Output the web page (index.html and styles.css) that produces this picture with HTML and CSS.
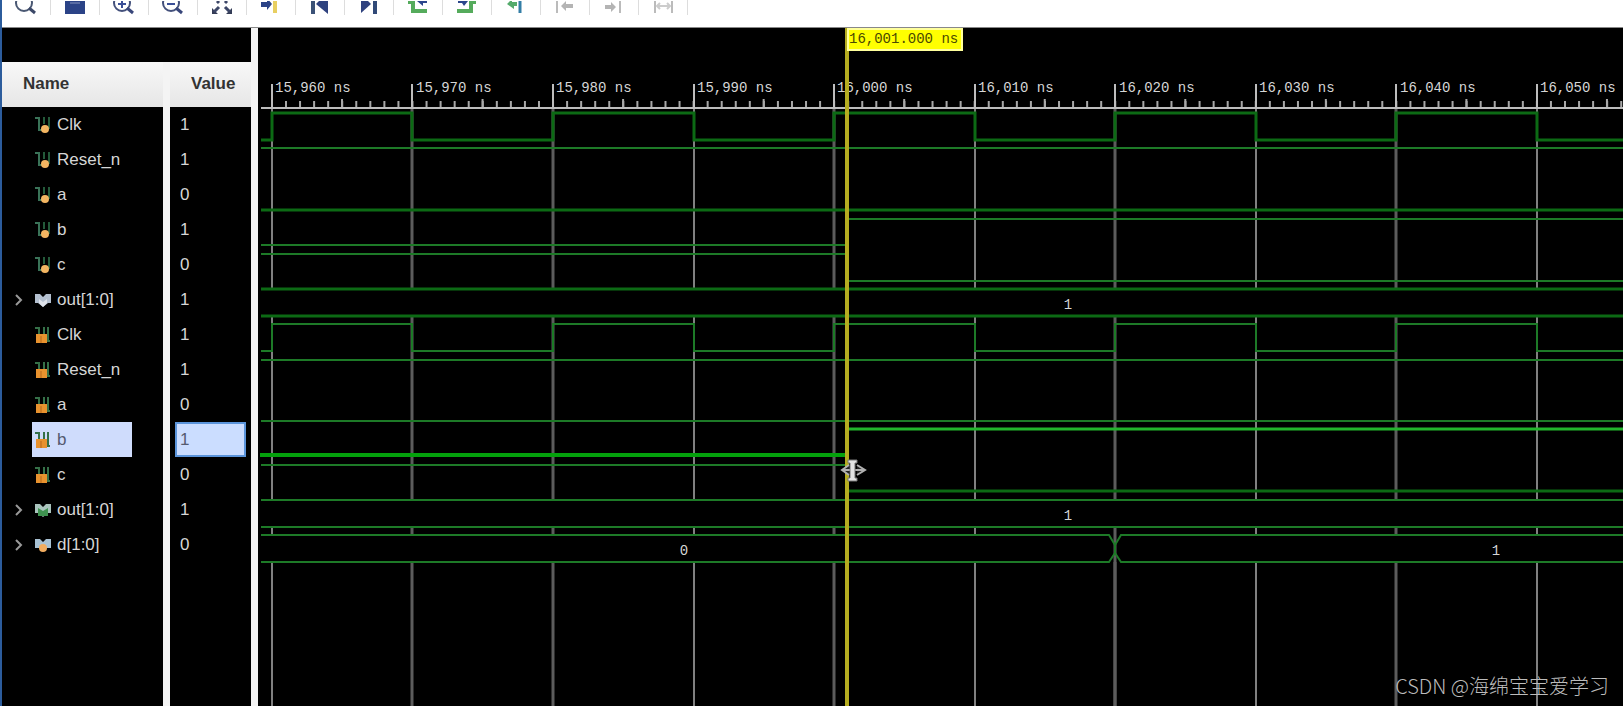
FILE: index.html
```html
<!DOCTYPE html>
<html lang="en">
<head>
<meta charset="utf-8">
<title>Waveform viewer</title>
<link rel="stylesheet" href="styles.css">
</head>
<body>
<svg class="defs" aria-hidden="true">
  <symbol id="sig-in" viewBox="0 0 16 18">
    <path d="M0 2H4V14H8" fill="none" stroke="#3a7358" stroke-width="2"/>
    <path d="M9 1V8M14 1V13" fill="none" stroke="#245a3a" stroke-width="2"/>
    <circle cx="10" cy="13" r="4" fill="#f3b562"/>
  </symbol>
  <symbol id="sig-reg" viewBox="0 0 16 18">
    <path d="M0 2H4V8M9 1V8M13 1V15H15" fill="none" stroke="#357048" stroke-width="2"/>
    <path d="M1 8H12V17H1Z" fill="#e8922e"/>
    <path d="M6 10V17" stroke="#b5661a"/>
  </symbol>
  <symbol id="bus-out" viewBox="0 0 18 18">
    <path d="M1 3H6L9 6L12 3H17V12H14L9 16L4 12H1Z" fill="#b4c0d0"/>
    <path d="M5 8L9 11L13 8V12L9 16L5 12Z" fill="#dfe3ea"/>
  </symbol>
  <symbol id="bus-reg" viewBox="0 0 18 18">
    <path d="M1 3H6L9 6L12 3H17V12H14L9 16L4 12H1Z" fill="#a9c4bd"/>
    <path d="M4 7L9 10L14 7V15H4Z" fill="#3f9350"/>
  </symbol>
  <symbol id="bus-in" viewBox="0 0 18 18">
    <path d="M1 3H6L9 6L12 3H17V12H1Z" fill="#a9c2d4"/>
    <circle cx="9" cy="12" r="4" fill="#f3ad60"/>
  </symbol>
  <symbol id="chevron" viewBox="0 0 8 12"><path d="M1 1L6 6L1 11" fill="none" stroke="#999" stroke-width="2"/></symbol>
</svg>

<div class="viewer">
  <header class="toolbar">
    <button class="tool" aria-label="Search"><svg class="tool-icon" viewBox="0 0 24 14"><circle cx="10" cy="2" r="8" fill="none" stroke="#4a5873" stroke-width="2"/><path d="M15 7L21 12" stroke="#3c4868" stroke-width="3"/></svg></button>
    <button class="tool" aria-label="Save"><svg class="tool-icon" viewBox="0 0 24 14"><path d="M2 0H22V13H2Z" fill="#2b4387"/><path d="M7 2H17" stroke="#8795c0"/></svg></button>
    <button class="tool" aria-label="Zoom in"><svg class="tool-icon" viewBox="0 0 24 14"><circle cx="10" cy="2" r="8" fill="none" stroke="#44517c" stroke-width="2"/><path d="M6 3H14M10 0V7" stroke="#3a4f97" stroke-width="2"/><path d="M15 7L21 12" stroke="#38467a" stroke-width="3"/></svg></button>
    <button class="tool" aria-label="Zoom out"><svg class="tool-icon" viewBox="0 0 24 14"><circle cx="10" cy="2" r="8" fill="none" stroke="#44517c" stroke-width="2"/><path d="M6 3H14" stroke="#3a4f97" stroke-width="2"/><path d="M15 7L21 12" stroke="#38467a" stroke-width="3"/></svg></button>
    <button class="tool" aria-label="Zoom fit"><svg class="tool-icon" viewBox="0 0 24 14"><path d="M2 7L8 13H2ZM22 7L16 13H22Z" fill="#333b55"/><path d="M4 11L9 6M20 11L15 6M7 0L9 2M17 0L15 2" stroke="#3d4768" stroke-width="3"/></svg></button>
    <button class="tool" aria-label="Go to cursor"><svg class="tool-icon" viewBox="0 0 24 14"><path d="M2 1H8V-3L13 3L8 9V6H2Z" fill="#2b4387"/><path d="M16 0V12" stroke="#e8cf62" stroke-width="4"/></svg></button>
    <button class="tool" aria-label="Previous transition"><svg class="tool-icon" viewBox="0 0 24 14"><path d="M5 0V13" stroke="#3b5277" stroke-width="4"/><path d="M20 0V13L8 3L11 0Z" fill="#2f427f"/></svg></button>
    <button class="tool" aria-label="Next transition"><svg class="tool-icon" viewBox="0 0 24 14"><path d="M4 0V12L14 3L11 0Z" fill="#2f427f"/><path d="M18 0V13" stroke="#314a78" stroke-width="4"/></svg></button>
    <button class="tool" aria-label="Previous marker"><svg class="tool-icon" viewBox="0 0 24 14"><path d="M2 1H7V10H21" fill="none" stroke="#55ab5c" stroke-width="4"/><path d="M11 0H21V2H17V5Z" fill="#2c468c"/></svg></button>
    <button class="tool" aria-label="Next marker"><svg class="tool-icon" viewBox="0 0 24 14"><path d="M2 10H16V1H21" fill="none" stroke="#55ab5c" stroke-width="4"/><path d="M3 0H13L9 5L7 2H3Z" fill="#2c468c"/></svg></button>
    <button class="tool" aria-label="Add marker"><svg class="tool-icon" viewBox="0 0 24 14"><path d="M3 3L8 -2V1H13V5H10V8Z" fill="#55ab6c"/><path d="M16 0V12" stroke="#347ea6" stroke-width="3"/></svg></button>
    <button class="tool" aria-label="Previous edge" disabled><svg class="tool-icon" viewBox="0 0 24 14"><path d="M4 0V12" stroke="#bbb" stroke-width="2"/><path d="M8 5L13 0V3H20V7H13V10Z" fill="#b4b4b4"/></svg></button>
    <button class="tool" aria-label="Next edge" disabled><svg class="tool-icon" viewBox="0 0 24 14"><path d="M18 0V12" stroke="#bbb" stroke-width="2"/><path d="M14 6L9 1V4H3V8H9V11Z" fill="#b4b4b4"/></svg></button>
    <button class="tool" aria-label="Fit range" disabled><svg class="tool-icon" viewBox="0 0 24 14"><path d="M4 0V12M21 0V12" stroke="#bbb" stroke-width="2"/><path d="M7 5H18M9 2L6 5L9 8M16 2L19 5L16 8" fill="none" stroke="#ccc" stroke-width="2"/></svg></button>
  </header>

  <main class="panes">
    <section class="signals">
      <table class="signal-table">
        <thead><tr><th class="name-col" scope="col">Name</th><th class="value-head" scope="col">Value</th></tr></thead>
        <tbody>
          <tr><td class="name-col"><div class="name"><svg class="sig"><use href="#sig-in"/></svg>Clk</div></td><td class="value">1</td></tr>
          <tr><td class="name-col"><div class="name"><svg class="sig"><use href="#sig-in"/></svg>Reset_n</div></td><td class="value">1</td></tr>
          <tr><td class="name-col"><div class="name"><svg class="sig"><use href="#sig-in"/></svg>a</div></td><td class="value">0</td></tr>
          <tr><td class="name-col"><div class="name"><svg class="sig"><use href="#sig-in"/></svg>b</div></td><td class="value">1</td></tr>
          <tr><td class="name-col"><div class="name"><svg class="sig"><use href="#sig-in"/></svg>c</div></td><td class="value">0</td></tr>
          <tr><td class="name-col"><div class="name bus"><button class="expand" aria-label="Expand"><svg class="chevron"><use href="#chevron"/></svg></button><svg class="sig"><use href="#bus-out"/></svg>out[1:0]</div></td><td class="value">1</td></tr>
          <tr><td class="name-col"><div class="name"><svg class="sig"><use href="#sig-reg"/></svg>Clk</div></td><td class="value">1</td></tr>
          <tr><td class="name-col"><div class="name"><svg class="sig"><use href="#sig-reg"/></svg>Reset_n</div></td><td class="value">1</td></tr>
          <tr><td class="name-col"><div class="name"><svg class="sig"><use href="#sig-reg"/></svg>a</div></td><td class="value">0</td></tr>
          <tr class="selected"><td class="name-col"><div class="name"><svg class="sig"><use href="#sig-reg"/></svg>b</div></td><td class="value"><div class="value-box">1</div></td></tr>
          <tr><td class="name-col"><div class="name"><svg class="sig"><use href="#sig-reg"/></svg>c</div></td><td class="value">0</td></tr>
          <tr><td class="name-col"><div class="name bus"><button class="expand" aria-label="Expand"><svg class="chevron"><use href="#chevron"/></svg></button><svg class="sig"><use href="#bus-reg"/></svg>out[1:0]</div></td><td class="value">1</td></tr>
          <tr><td class="name-col"><div class="name bus"><button class="expand" aria-label="Expand"><svg class="chevron"><use href="#chevron"/></svg></button><svg class="sig"><use href="#bus-in"/></svg>d[1:0]</div></td><td class="value">0</td></tr>
        </tbody>
      </table>
      <div class="signal-rest"></div>
    </section>

    <section class="wave" aria-label="Waveforms">
      <svg class="plot">
        <g transform="translate(-258 -28)">
          <!-- time grid -->
          <g class="grid-wide">
            <path d="M412 107V289M553 107V289M834 107V289M1115 107V289M1396 107V289"/>
            <path d="M412 316V499M553 316V499M834 316V499M1115 316V499M1396 316V499"/>
            <path d="M412 527V535M553 527V535M834 527V535M1115 527V706M1396 527V535"/>
            <path d="M412 562V1200M553 562V1200M834 562V1200M1115 562V1200M1396 562V1200"/>
          </g>
          <g class="grid-thin">
            <path d="M272 107V289M694 107V289M975 107V289M1256 107V289M1537 107V289"/>
            <path d="M272 316V499M694 316V499M975 316V499M1256 316V499M1537 316V499"/>
            <path d="M272 527V535M694 527V535M975 527V535M1256 527V535M1537 527V535"/>
            <path d="M272 562V1200M694 562V1200M975 562V1200M1256 562V1200M1537 562V1200"/>
          </g>

          <!-- ruler -->
          <path class="ticks" d="M285 104H3000"/>
          <path class="ticks-mid" d="M341 103H3000"/>
          <path class="ruler" d="M261 108H3000M272 84V108M412 84V108M553 84V108M694 84V108M834 84V108M975 84V108M1115 84V108M1256 84V108M1396 84V108M1537 84V108"/>
          <g class="time">
            <text x="275" y="92">15,960 ns</text>
            <text x="416" y="92">15,970 ns</text>
            <text x="556" y="92">15,980 ns</text>
            <text x="697" y="92">15,990 ns</text>
            <text x="837" y="92">16,000 ns</text>
            <text x="978" y="92">16,010 ns</text>
            <text x="1119" y="92">16,020 ns</text>
            <text x="1259" y="92">16,030 ns</text>
            <text x="1400" y="92">16,040 ns</text>
            <text x="1540" y="92">16,050 ns</text>
          </g>

          <!-- signals -->
          <g class="trace strong">
            <path d="M261 140H272V113H412V140H553V113H694V140H834V113H975V140H1115V113H1256V140H1396V113H1537V140H3000"/>
            <path d="M261 210H3000"/>
            <path d="M261 289H3000M261 316H3000"/>
            <path d="M847 491H3000"/>
          </g>
          <g class="trace">
            <path d="M261 148H3000"/>
            <path d="M261 245H847M847 219H3000"/>
            <path d="M261 254H847M847 281H3000"/>
            <path d="M261 351H272V324H412V351H553V324H694V351H834V324H975V351H1115V324H1256V351H1396V324H1537V351H3000"/>
            <path d="M261 360H3000M261 421H3000M261 465H847"/>
            <path d="M261 500H3000M261 527H3000"/>
            <path d="M261 535H1109L1115 545V553L1109 562H261M3000 535H1121L1115 545V553L1121 562H3000"/>
          </g>
          <path class="active" d="M260 455H847"/>
          <path class="active-high" d="M847 429H3000"/>
          <g class="bus-text">
            <text x="1068" y="309">1</text>
            <text x="1068" y="520">1</text>
            <text x="684" y="555">0</text>
            <text x="1496" y="555">1</text>
          </g>

          <!-- time cursor -->
          <path class="cursor" d="M847 28V1200"/>
          <path class="cursor-box" d="M848 29H962V50H848Z"/>
          <text class="cursor-text" x="849" y="43">16,001.000 ns</text>

          <!-- resize pointer -->
          <path class="pointer-arrows" d="M849 465L842 470L849 475M857 465L865 470L857 475M843 470H864"/>
          <path class="pointer" d="M848 460H857V463H855V478H857V481H848V478H850V463H848Z"/>
        </g>
      </svg>
      <p class="watermark">CSDN @海绵宝宝爱学习</p>
    </section>
  </main>
</div>
</body>
</html>
```
FILE: styles.css
```css
* { box-sizing: border-box; }

body {
  margin: 0;
  background: #000;
  color: #d6d6d6;
  font: 17px/20px "Liberation Sans", Arial, sans-serif;
}

.defs { display: none; }

.viewer {
  display: flex;
  flex-direction: column;
  height: 100vh;
  border-left: 2px solid #2c5c9c;
}

.toolbar {
  display: flex;
  flex: none;
  height: 28px;
  background: #fff;
  border-bottom: 1px solid #888;
}

.tool {
  width: 49px;
  height: 15px;
  padding: 0;
  border: 0;
  border-right: 1px solid #ddd;
  background: none;
}

.tool-icon {
  display: block;
  width: 24px;
  height: 14px;
  margin: 0 auto;
}

.panes {
  display: flex;
  flex: 1;
  min-height: 0;
}

.signals {
  display: flex;
  flex-direction: column;
  flex: none;
  width: 256px;
  padding-top: 34px;
  border-right: 7px solid #f4f4f4;
  overflow: hidden;
}

.signal-table {
  width: 100%;
  border-collapse: separate;
  border-spacing: 0;
  table-layout: fixed;
}

.signal-table th {
  height: 45px;
  padding: 0 0 2px 21px;
  background: linear-gradient(#f8f8f8, #e6e6e6);
  color: #333;
  text-align: left;
}

.signal-table .name-col {
  width: 168px;
  border-right: 7px solid #f4f4f4;
}

.signal-table td {
  height: 35px;
  padding: 0;
}

.name {
  display: flex;
  align-items: center;
  width: 100px;
  height: 35px;
  margin-left: 30px;
  padding-left: 2px;
  gap: 5px;
}

.bus {
  width: 130px;
  margin-left: 0;
  padding-left: 13px;
}

.expand {
  width: 14px;
  height: 12px;
  padding: 0;
  border: 0;
  background: none;
}

.chevron {
  display: block;
  width: 8px;
  height: 12px;
}

.sig {
  flex: none;
  width: 18px;
  height: 18px;
}

.signal-table .value { padding-left: 10px; }
.signal-table .value-head { padding-left: 21px; }

.selected .name {
  background: #cfdcfc;
  color: #555a70;
}

.signal-table .selected .value { padding: 0 5px; }

.value-box {
  height: 35px;
  padding: 6px 3px;
  border: 2px solid #5b94da;
  background: #cbddff;
  color: #555a70;
}

.signal-rest {
  flex: 1;
  width: 168px;
  border-right: 7px solid #f4f4f4;
}

.wave {
  position: relative;
  flex: 1;
  min-width: 0;
  overflow: hidden;
}

.plot {
  display: block;
  width: 100%;
  height: 100%;
}

.grid-wide { stroke: #5c5c5c; stroke-width: 3; }
.grid-thin { stroke: #808080; stroke-width: 2; }

.ruler { fill: none; stroke: #bdbdbd; stroke-width: 2; }
.ticks { stroke: #a8a8a8; stroke-width: 6; stroke-dasharray: 2 12.055; }
.ticks-mid { stroke: #a8a8a8; stroke-width: 8; stroke-dasharray: 2 138.55; }

.time, .bus-text, .cursor-text {
  font: 14px "Liberation Mono", monospace;
  fill: #d6d6d6;
}

.bus-text { text-anchor: middle; }

.trace { fill: none; stroke: #1d7a27; stroke-width: 2; }
.strong { stroke: #0c6a14; stroke-width: 3; }
.active { stroke: #04a00c; stroke-width: 4; }
.active-high { stroke: #22b52c; stroke-width: 3; }

.cursor { stroke: #b5ac20; stroke-width: 4; }
.cursor-box { fill: #ff0; stroke: #ffff9c; stroke-width: 2; }
.cursor-text { fill: #4a4800; }
.pointer { fill: #e4e4e4; stroke: #777; }
.pointer-arrows { fill: #222; stroke: #b0b0b0; stroke-width: 2; }

.watermark {
  position: absolute;
  right: 14px;
  bottom: 5px;
  margin: 0;
  color: #bcbcbc;
  font: 300 20px/30px "Noto Sans CJK SC", sans-serif;
}
```
